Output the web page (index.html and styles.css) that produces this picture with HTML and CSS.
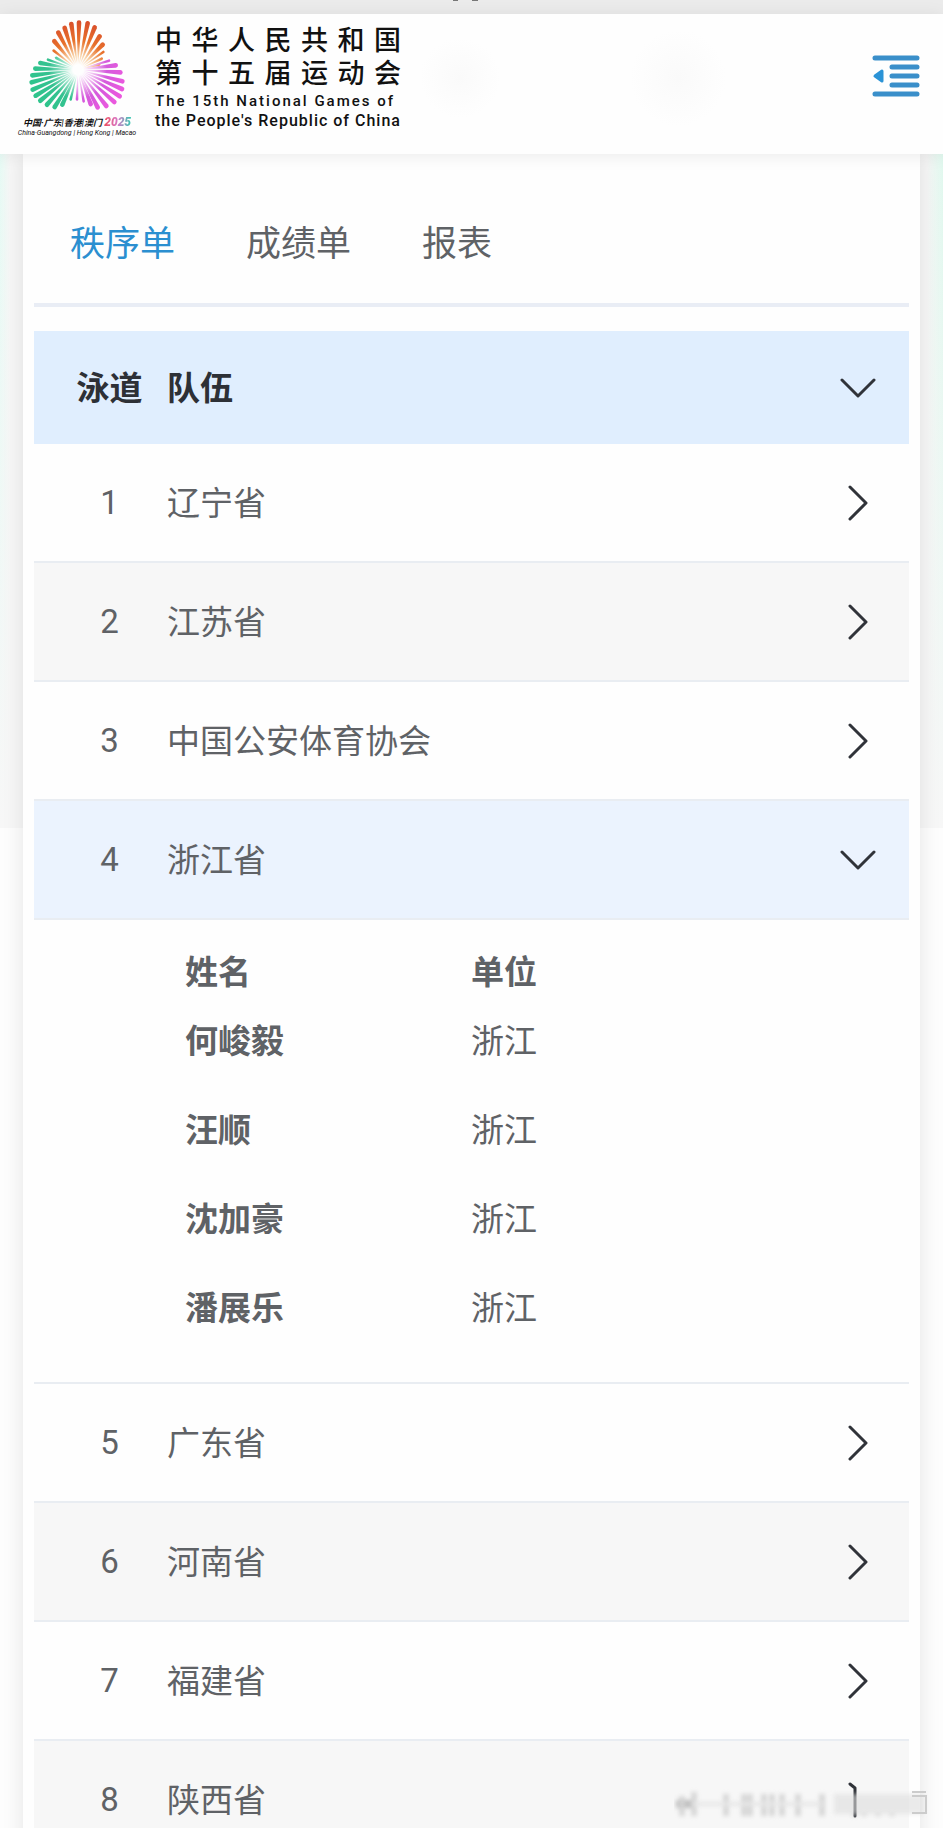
FILE: index.html
```
<!DOCTYPE html>
<html lang="zh-CN">
<head>
  <meta charset="utf-8">
  <meta name="viewport" content="width=device-width, initial-scale=1">
  <title>秩序单</title>
  <link rel="stylesheet" href="styles.css">
</head>
<body>
  <div class="status-bar">
    <svg width="40" height="2" viewBox="0 0 40 2"><path d="M13 0h5M32 0h6" stroke="#777" stroke-width="2"/></svg>
  </div>

  <header class="header">
    <a href="#" class="brand">
      <span class="emblem">
        <svg id="flower" width="98" height="94" viewBox="55 22 294 278" aria-hidden="true">
          <defs>
            <radialGradient id="orange" gradientUnits="userSpaceOnUse" cx="205" cy="175" r="145">
              <stop offset="0.1" stop-color="#fff"/><stop offset="0.3" stop-color="#f9d3a8"/><stop offset="0.6" stop-color="#e8722c"/><stop offset="1" stop-color="#d94f2a"/>
            </radialGradient>
            <radialGradient id="green" gradientUnits="userSpaceOnUse" cx="205" cy="175" r="145">
              <stop offset="0.1" stop-color="#fff"/><stop offset="0.3" stop-color="#a5e6cf"/><stop offset="0.6" stop-color="#35c190"/><stop offset="1" stop-color="#2fc48c"/>
            </radialGradient>
            <radialGradient id="pink" gradientUnits="userSpaceOnUse" cx="205" cy="175" r="145">
              <stop offset="0.1" stop-color="#fff"/><stop offset="0.35" stop-color="#eeb6f0"/><stop offset="0.6" stop-color="#d45bdc"/><stop offset="1" stop-color="#ea58de"/>
            </radialGradient>
          </defs>
        </svg>
        <span class="emblem-cn">中国·广东|香港|澳门 <b>2025</b></span>
        <span class="emblem-en">China·Guangdong | Hong Kong | Macao</span>
      </span>
      <span class="brand-text">
        <span class="brand-cn">中华人民共和国</span>
        <span class="brand-cn">第十五届运动会</span>
        <span class="brand-en wide">The 15th National Games of</span>
        <span class="brand-en">the People's Republic of China</span>
      </span>
    </a>
    <button class="menu" aria-label="菜单">
      <svg width="48" height="42" viewBox="0 0 48 42">
        <path d="M3 3h42M20 12h25M20 21h25M20 30h25M3 39h42" stroke="#3a8fca" stroke-width="5" stroke-linecap="round"/>
        <path d="M3 21l7-5v10z" fill="#2b93d6" stroke="#2b93d6" stroke-width="3" stroke-linejoin="round"/>
      </svg>
    </button>
  </header>

  <main class="page">
    <div class="card">
      <nav class="tabs">
        <a href="#" class="active">秩序单</a>
        <a href="#">成绩单</a>
        <a href="#">报表</a>
      </nav>

      <div class="list">
        <button class="row head">
          <span class="lane">泳道</span><span class="team">队伍</span>
          <svg class="arrow" viewBox="0 0 36 36"><path d="M2 10l16 16 16-16"/></svg>
        </button>
        <button class="row">
          <span class="lane">1</span><span class="team">辽宁省</span>
          <svg class="arrow" viewBox="0 0 36 36"><path d="M10 2l16 16-16 16"/></svg>
        </button>
        <button class="row gray">
          <span class="lane">2</span><span class="team">江苏省</span>
          <svg class="arrow" viewBox="0 0 36 36"><path d="M10 2l16 16-16 16"/></svg>
        </button>
        <button class="row">
          <span class="lane">3</span><span class="team">中国公安体育协会</span>
          <svg class="arrow" viewBox="0 0 36 36"><path d="M10 2l16 16-16 16"/></svg>
        </button>
        <button class="row open" aria-expanded="true">
          <span class="lane">4</span><span class="team">浙江省</span>
          <svg class="arrow" viewBox="0 0 36 36"><path d="M2 10l16 16 16-16"/></svg>
        </button>
        <div class="members">
          <table>
            <thead>
              <tr><th>姓名</th><th>单位</th></tr>
            </thead>
            <tbody>
              <tr><th>何峻毅</th><td>浙江</td></tr>
              <tr><th>汪顺</th><td>浙江</td></tr>
              <tr><th>沈加豪</th><td>浙江</td></tr>
              <tr><th>潘展乐</th><td>浙江</td></tr>
            </tbody>
          </table>
        </div>
        <button class="row">
          <span class="lane">5</span><span class="team">广东省</span>
          <svg class="arrow" viewBox="0 0 36 36"><path d="M10 2l16 16-16 16"/></svg>
        </button>
        <button class="row gray">
          <span class="lane">6</span><span class="team">河南省</span>
          <svg class="arrow" viewBox="0 0 36 36"><path d="M10 2l16 16-16 16"/></svg>
        </button>
        <button class="row">
          <span class="lane">7</span><span class="team">福建省</span>
          <svg class="arrow" viewBox="0 0 36 36"><path d="M10 2l16 16-16 16"/></svg>
        </button>
        <button class="row gray">
          <span class="lane">8</span><span class="team">陕西省</span>
          <svg class="arrow" viewBox="0 0 36 36"><path d="M10 2l5 4v28"/></svg>
        </button>
      </div>
    </div>
  </main>

  <svg class="watermark" width="260" height="36" viewBox="0 0 260 36" aria-hidden="true">
    <g class="smear">
      <path d="M2 18h16" stroke="#999" stroke-width="8"/>
      <path d="M8 10v20M20 6v24M52 8v22M70 8v22M76 8v22M90 8v22M98 8v22M108 8v22M124 8v22M148 8v22M180 8v22M190 8v22M204 8v22M218 8v22" stroke="#bbb" stroke-width="5"/>
      <path d="M18 18h130" stroke="#ddd" stroke-width="4"/>
      <path d="M160 18h90" stroke="#ddd" stroke-width="20"/>
    </g>
    <path d="M238 6h14M238 10h14v17h-14" fill="none" stroke="#ccc" stroke-width="2"/>
  </svg>

  <script src="script.js"></script>
</body>
</html>
```
FILE: styles.css
```
* {
  box-sizing: border-box;
}
html {
  height: 100%;
  overflow: hidden;
}
body {
  margin: 0;
  height: 100%;
  overflow: hidden;
  background: #fdfdfd;
  color: #5f6266;
  font-family: Roboto, "Noto Sans CJK SC", sans-serif;
  font-size: 33px;
}
button {
  border: none;
  background: none;
  padding: 0;
  font: inherit;
  color: inherit;
  cursor: pointer;
}
a {
  color: inherit;
  text-decoration: none;
}

.status-bar {
  display: flex;
  justify-content: center;
  height: 14px;
  background: #ebebeb;
}
.status-bar svg {
  margin-right: 24px;
}

.header {
  position: relative;
  display: flex;
  justify-content: space-between;
  align-items: flex-start;
  height: 140px;
  padding: 0 23px 0 22px;
  background:
    radial-gradient(circle at 460px 64px, #fafafa, transparent 40px),
    radial-gradient(circle at 678px 64px, #fafafa, transparent 48px),
    #fefefe;
  box-shadow: 0 2px 16px rgba(0, 0, 0, 0.08);
}
.brand {
  display: flex;
  gap: 23px;
  color: #111;
}
.emblem {
  display: flex;
  flex-direction: column;
  align-items: center;
  width: 110px;
  padding-top: 4px;
  white-space: nowrap;
  font-style: italic;
}
.emblem-cn {
  margin-top: 4px;
  font-size: 9px;
  font-weight: bold;
  line-height: 12px;
}
.emblem-cn b {
  font-size: 12px;
  background: linear-gradient(90deg, #ee4f5c, #d876c8, #35c9b0);
  background-clip: text;
  color: transparent;
}
.emblem-en {
  font-size: 7px;
  line-height: 8px;
}
.brand-text {
  display: flex;
  flex-direction: column;
  width: 246px;
  padding-top: 11px;
  white-space: nowrap;
}
.brand-cn {
  font-size: 27px;
  line-height: 33px;
  font-weight: 500;
  text-align-last: justify;
}
.brand-en {
  font-size: 16px;
  line-height: 20px;
  font-weight: 500;
  letter-spacing: 1px;
}
.brand-en.wide {
  font-size: 15px;
  letter-spacing: 2px;
}
.menu {
  display: flex;
  margin-top: 41px;
}

.page {
  padding: 0 23px;
  background:
    linear-gradient(transparent, #f7f7f7) no-repeat 0 0 / 100% 674px,
    linear-gradient(90deg, #e6faf4, #f7f7f7 10px, #f7f7f7 calc(100% - 16px), #e0f8ee) no-repeat 0 0 / 100% 674px;
}
.card {
  padding: 0 11px;
  background: #fefefe;
  box-shadow: 0 0 20px rgba(0, 0, 0, 0.1);
}
.tabs {
  display: flex;
  gap: 71px;
  padding: 64px 36px 32px;
  border-bottom: 4px solid #e9edf5;
  font-size: 35px;
  line-height: 53px;
}
.tabs .active {
  color: #2b8fd0;
}

.list {
  padding-top: 24px;
}
.row {
  display: flex;
  align-items: center;
  width: 100%;
  height: 119px;
  padding: 0 33px 0 42px;
  border-bottom: 2px solid #e9edf2;
  text-align: left;
}
.row.head {
  height: 113px;
  border-bottom: none;
  background: #e0eefe;
  color: #2d3036;
  font-weight: bold;
}
.row.gray {
  background: #f7f7f7;
}
.row.open {
  background: #ebf3fe;
}
.lane {
  width: 67px;
  text-align: center;
}
.team {
  flex: 1;
  padding: 0 0 4px 24px;
}
.head .lane {
  padding-bottom: 4px;
}
.arrow {
  width: 36px;
  height: 36px;
  fill: none;
  stroke: #303339;
  stroke-width: 3;
  stroke-linecap: round;
  stroke-linejoin: round;
}

.members {
  padding: 30px 0 31px 151px;
  border-bottom: 2px solid #e9edf2;
}
.members table {
  border-collapse: collapse;
}
.members th,
.members td {
  width: 286px;
  height: 89px;
  padding: 0 0 2px;
  text-align: left;
}
.members thead th {
  height: 45px;
  padding: 0;
  line-height: 45px;
}

.watermark {
  position: fixed;
  right: 9px;
  bottom: 6px;
}
.smear {
  filter: blur(2px);
  opacity: 0.6;
}
```
FILE: script.js
```
const flower = document.getElementById("flower");
const cx = 205, cy = 175;

const petals = {
  orange: [[132, 118], [134, 90], [146, 64], [165, 50], [185, 38], [208, 34], [234, 36], [255, 48], [270, 75], [279, 100], [281, 122], [276, 142], [268, 160]],
  green: [[140, 140], [115, 145], [92, 155], [77, 172], [68, 192], [66, 213], [69, 235], [78, 253], [92, 268], [112, 280], [135, 287], [158, 280], [183, 264]],
  pink: [[298, 148], [318, 162], [332, 183], [338, 210], [337, 233], [330, 255], [314, 272], [290, 284], [264, 288], [243, 278], [222, 270], [202, 264]]
};

// each petal is a wedge from the centre with a round tip
for (const color in petals) {
  for (const [x, y] of petals[color]) {
    const len = Math.hypot(x - cx, y - cy);
    const r = len > 100 ? 7 : 4;
    const nx = -(y - cy) / len * r;
    const ny = (x - cx) / len * r;
    const path = document.createElementNS("http://www.w3.org/2000/svg", "path");
    path.setAttribute("d", `M${cx} ${cy}L${x - nx} ${y - ny}A${r} ${r} 0 0 1 ${x + nx} ${y + ny}Z`);
    path.setAttribute("fill", `url(#${color})`);
    flower.appendChild(path);
  }
}
```
